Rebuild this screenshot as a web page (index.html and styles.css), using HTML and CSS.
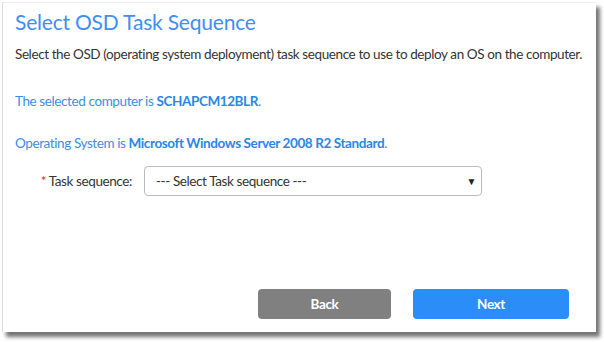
FILE: index.html
```html
<html>
<head>
    <title>Select OSD Task Sequence</title>
    <link rel="stylesheet" href="styles.css">
</head>
<body>

<div id="panel">
    <h1 class="title">Select OSD Task Sequence</h1>
    <div class="intro">Select the OSD (operating system deployment) task sequence to use to deploy an OS on the computer.</div>

    <div class="info computer">The selected computer is <b>SCHAPCM12BLR</b>.</div>
    <div class="info os">Operating System is <b>Microsoft Windows Server 2008 R2 Standard</b>.</div>

    <div class="field">
        <span class="label"><span class="req">*</span> Task sequence:</span>
        <div class="select">
            <span>--- Select Task sequence ---</span>
            <span class="arrow">&#9660;</span>
        </div>
    </div>

    <div class="buttons">
        <span class="button back">Back</span>
        <span class="button next">Next</span>
    </div>
</div>

</body>
</html>
```

FILE: styles.css
```css
body {
    margin: 0;
    background: #ffffff;
    font-family: Lato, "Open Sans", sans-serif;
    font-size: 13.5px;
    letter-spacing: -0.4px;
    color: #333333;
}

#panel {
    box-sizing: border-box;
    width: 594px;
    height: 330px;
    margin: 2px 0 0 2px;
    padding: 0 0 0 12px;
    background: #ffffff;
    border-left: solid 1px #dddddd;
    border-top: solid 1px #eeeeee;
    box-shadow: 4px 5px 4px rgba(0, 0, 0, 0.55);
    display: flex;
    flex-direction: column;
}

.title {
    margin: 6px 0 0 0;
    font-size: 21px;
    letter-spacing: -0.2px;
    font-weight: normal;
    color: #3f8ef2;
    line-height: 26px;
}

.intro {
    margin-top: 10px;
    line-height: 18px;
}

.info {
    line-height: 18px;
    color: #3b8de6;
}

.info b {
    color: #2a86e8;
}

.computer {
    margin-top: 29px;
}

.os {
    margin-top: 24px;
}

.field {
    margin-top: 14px;
    display: flex;
    align-items: center;
}

.label {
    width: 117px;
    text-align: right;
}

.req {
    color: #d03030;
}

.select {
    box-sizing: border-box;
    margin-left: 12px;
    width: 338px;
    height: 30px;
    border: solid 1px #bbbbbb;
    border-radius: 4px;
    padding: 0 5px 0 11px;
    display: flex;
    align-items: center;
    justify-content: space-between;
}

.arrow {
    font-size: 10px;
    color: #222222;
}

.buttons {
    margin-top: auto;
    margin-bottom: 13px;
    display: flex;
    gap: 22px;
    padding-left: 243px;
}

.button {
    height: 30px;
    line-height: 30px;
    text-align: center;
    color: #ffffff;
    font-weight: bold;
    border-radius: 4px;
}

.back {
    width: 133px;
    background: #808080;
}

.next {
    width: 156px;
    background: #2b8ef8;
}
```
